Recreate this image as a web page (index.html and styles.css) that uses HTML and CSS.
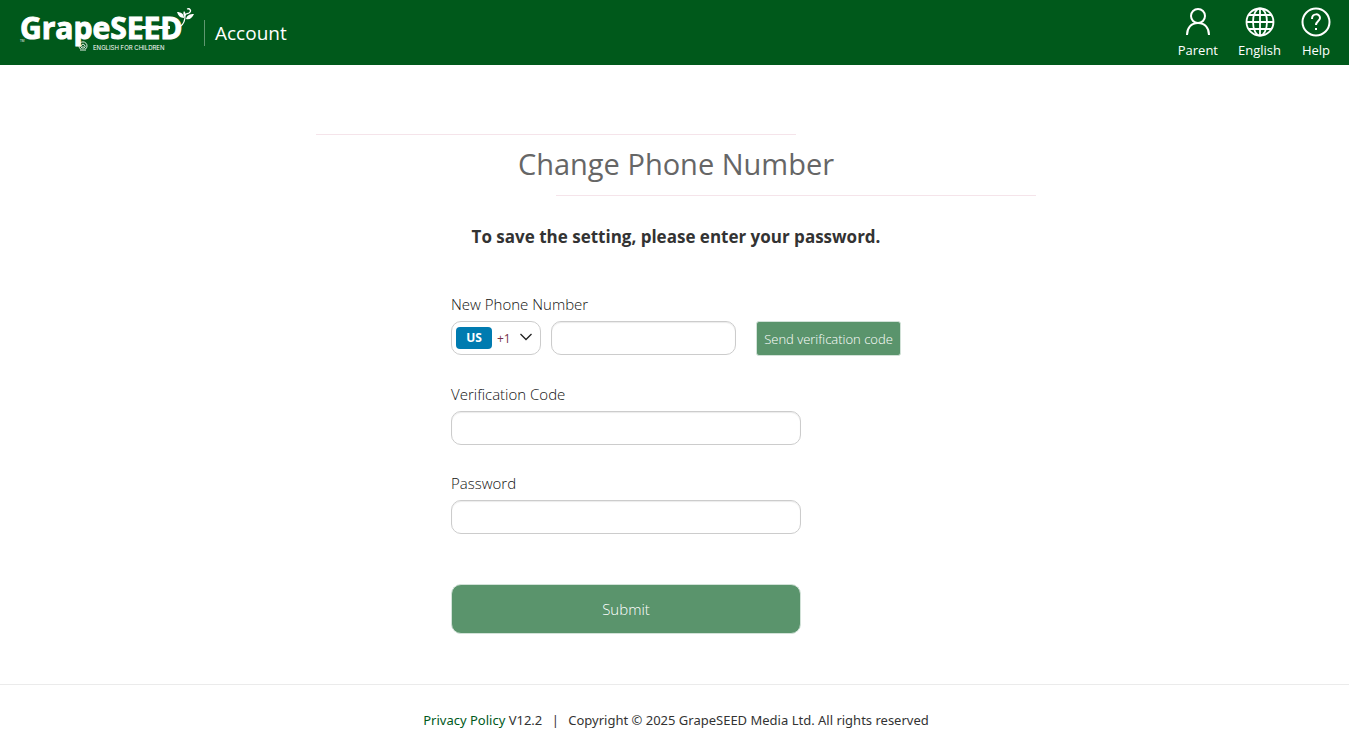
FILE: index.html
```html
<!DOCTYPE html>
<html lang="en">
<head>
  <meta charset="UTF-8" />
  <meta name="viewport" content="width=device-width, initial-scale=1.0"/>
  <title>Change Phone Number</title>
  <link rel="stylesheet" href="styles.css">
</head>
<body>
  <header class="navbar">
    <a class="brand" href="#" aria-label="GrapeSEED English for Children">
      <svg class="logo" width="184" height="56" viewBox="0 0 184 56">
        <text class="logo-name" x="8" y="39">GrapeSEED</text>
        <text class="logo-tm" x="8" y="42">TM</text>
        <text class="logo-tag" x="81" y="50">ENGLISH FOR CHILDREN</text>
        <!-- bar through the two E's and the D -->
        <path d="M118 27.500h40" fill="none" stroke="#fff" stroke-width="3"/>
        <!-- sprout -->
        <path d="M165 28c4-1 7-4 8-10M173 18c-1-4 1-4 4-5 3-2 1-5-2-4" fill="none" stroke="#fff" stroke-width="1.300"/>
        <path d="M172 18c-4 0-6-3-7-6 4 0 7 2 7 6zM174 19c1-4 4-5 8-5-2 4-4 6-8 5zM173 17c-2-2-2-4-1-6 2 2 2 4 1 6z" fill="#fff"/>
        <!-- badge -->
        <path d="M68.500 49a4 4 0 1 1 5 0M70 48a2 2 0 1 1 2 0M71 46v5M69 48.500v2.500M73 48.500v2.500" fill="none" stroke="#fff" stroke-width="0.900"/>
      </svg>
    </a>
    <span class="site-name">Account</span>
    <nav class="menu">
      <a class="menu-item" href="#">
        <svg width="30" height="30" viewBox="0 0 30 30">
          <circle cx="15" cy="9" r="7"/>
          <path d="M4 28c0-7 4-12 11-12s11 5 11 12"/>
        </svg>
        Parent
      </a>
      <a class="menu-item" href="#">
        <svg class="globe" width="30" height="30" viewBox="0 0 30 30">
          <circle cx="15" cy="15" r="13.500"/>
          <ellipse cx="15" cy="15" rx="7" ry="13.500"/>
          <path d="M15 1v28M1 15h28M4 8h22M4 22h22"/>
        </svg>
        English
      </a>
      <a class="menu-item" href="#">
        <svg width="30" height="30" viewBox="0 0 30 30">
          <circle cx="15" cy="15" r="13.500"/>
          <path d="M11 12c0-6 8-6 8-1 0 3-4 3-4 7"/>
          <path d="M15 21v2"/>
        </svg>
        Help
      </a>
    </nav>
  </header>

  <main class="content">
    <div class="title">
      <h1>Change Phone Number</h1>
    </div>
    <h2>To save the setting, please enter your password.</h2>

    <form class="phone-form">
      <div class="form-group">
        <label for="phone">New Phone Number</label>
        <div class="phone-row">
          <div class="country">
            <span class="country-code">US</span>
            <select class="country-select" aria-label="Country code">
              <option>+1</option>
            </select>
            <svg class="chevron" width="12" height="8" viewBox="0 0 12 8">
              <path d="M0.500 1L6 6.500L11.500 1"/>
            </svg>
          </div>
          <input class="form-control phone-input" type="tel" id="phone">
          <button class="send-button" type="button">Send verification code</button>
        </div>
      </div>
      <div class="form-group">
        <label for="code">Verification Code</label>
        <input class="form-control" type="text" id="code">
      </div>
      <div class="form-group">
        <label for="password">Password</label>
        <input class="form-control" type="password" id="password">
      </div>
      <button class="submit-button" type="submit">Submit</button>
    </form>
  </main>

  <footer class="footer">
    <a href="#">Privacy Policy</a> <span>V12.2</span>
    <span class="divider">|</span>
    <span>Copyright © 2025 GrapeSEED Media Ltd. All rights reserved</span>
  </footer>
</body>
</html>
```
FILE: styles.css
```css
* {
  box-sizing: border-box;
}
body {
  font-family: "Open Sans", "Noto Sans", sans-serif;
  font-size: 13px;
  color: #333;
  margin: 0;
  background-color: #fff;
}
.navbar {
  display: flex;
  align-items: center;
  height: 65px;
  padding: 0 18px 0 12px;
  background-color: #00591b;
  color: #fff;
}
.brand {
  display: flex;
  height: 56px;
  margin-bottom: 9px;
}
.logo text {
  fill: #fff;
}
.logo .logo-name {
  font-size: 30px;
  font-weight: 700;
  stroke: #fff;
  stroke-width: 1px;
}
.logo-tm {
  font-size: 3px;
}
.logo-tag {
  font-family: Inter, sans-serif;
  font-size: 6px;
}
.site-name {
  font-size: 19px;
  line-height: 26px;
  margin-left: 8px;
  padding-left: 10px;
  border-left: 1px solid #5f9770;
}
.menu {
  display: flex;
  gap: 20px;
  margin-left: auto;
}
.menu-item {
  display: flex;
  flex-direction: column;
  align-items: center;
  color: #fff;
  line-height: 18px;
  gap: 4px;
  text-decoration: none;
}
.menu-item svg {
  fill: none;
  stroke: #fff;
  stroke-width: 2;
}
.menu-item .globe {
  stroke-width: 1.8;
}
.content {
  padding: 69px 0 50px 3px;
}
.title {
  position: relative;
  max-width: 720px;
  margin: 0 auto;
  padding: 9px 0 11px;
  text-align: center;
}
.title::before,
.title::after {
  content: "";
  position: absolute;
  width: 480px;
  height: 1px;
  background-color: #f5e4ea;
}
.title::before {
  top: 0;
  left: 0;
}
.title::after {
  right: 0;
  bottom: 0;
}
h1 {
  margin: 0;
  font-size: 29px;
  font-weight: 400;
  line-height: 42px;
  color: #666;
}
h2 {
  margin: 28px 0 0;
  font-size: 17px;
  font-weight: 700;
  line-height: 26px;
  text-align: center;
}
.phone-form {
  width: 450px;
  margin: 44px auto 0;
}
.form-group {
  margin-bottom: 28px;
}
label {
  display: block;
  margin-bottom: 7px;
  color: #111;
  font-size: 15px;
  font-weight: 300;
  line-height: 20px;
}
.form-control {
  display: block;
  width: 350px;
  height: 34px;
  padding: 6px 12px;
  border: 1px solid #ccc;
  border-radius: 10px;
  background-color: #fff;
  box-shadow: inset 0 1px 1px rgba(0, 0, 0, 0.08);
  font: inherit;
}
.phone-row {
  display: flex;
}
.country {
  position: relative;
  display: flex;
  align-items: center;
  width: 90px;
  height: 34px;
  margin-right: 10px;
  padding: 0 4px;
  border: 1px solid #ccc;
  border-radius: 10px;
}
.country-code {
  width: 36px;
  border-radius: 4px;
  background-color: #007bb0;
  color: #fff;
  font-size: 12px;
  font-weight: 700;
  line-height: 22px;
  text-align: center;
}
.country-select {
  flex: 1;
  width: 0;
  padding: 0 0 0 5px;
  border: 0;
  appearance: none;
  background: none;
  color: #79304a;
  font: inherit;
  font-size: 12px;
}
.chevron {
  position: absolute;
  top: 11px;
  right: 8px;
  fill: none;
  stroke: #222;
  stroke-width: 1.3;
  pointer-events: none;
}
.phone-input {
  width: 185px;
  margin-right: 20px;
}
.send-button,
.submit-button {
  border: 1px solid #d2e2d8;
  background-color: #5a946c;
  color: #fff;
  font: inherit;
}
.send-button {
  width: 145px;
  height: 35px;
  padding: 0;
  border-radius: 3px;
  font-weight: 300;
}
.submit-button {
  display: block;
  width: 350px;
  height: 50px;
  margin-top: 50px;
  border-radius: 10px;
  font-size: 15px;
  font-weight: 300;
}
.footer {
  padding: 25px 0 24px 3px;
  border-top: 1px solid #ebebeb;
  font-family: "Noto Sans", sans-serif;
  line-height: 20px;
  text-align: center;
}
.footer a {
  color: #00591b;
  text-decoration: none;
}
.divider {
  margin: 0 6px;
}
```
